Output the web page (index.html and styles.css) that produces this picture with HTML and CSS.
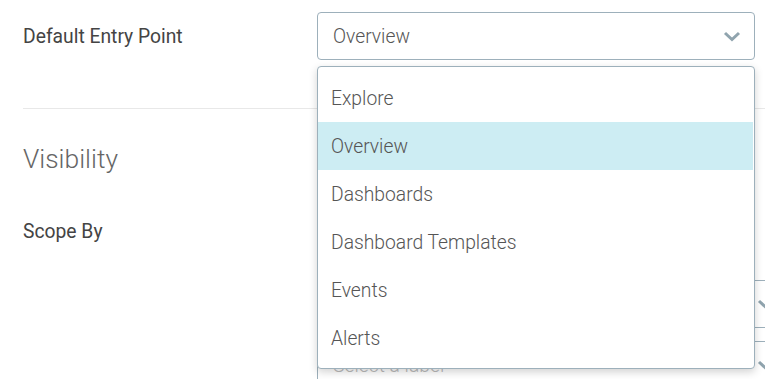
FILE: index.html
```html
<!DOCTYPE html>
<html lang="en">
<head>
    <meta charset="UTF-8">
    <meta name="viewport" content="width=device-width, initial-scale=1.0">
    <title>Settings</title>
    <link rel="stylesheet" href="styles.css">
</head>
<body>
    <div class="settings">
        <div class="row entry-row">
            <label class="field-label">Default Entry Point</label>
            <div class="select-wrap">
                <div class="select">
                    <span class="select-value">Overview</span>
                    <svg class="chevron" width="18" height="11" viewBox="0 0 18 11"><polyline points="2,2 9,8.5 16,2" /></svg>
                </div>
                <ul class="menu">
                    <li>Explore</li>
                    <li class="active">Overview</li>
                    <li>Dashboards</li>
                    <li>Dashboard Templates</li>
                    <li>Events</li>
                    <li>Alerts</li>
                </ul>
            </div>
        </div>

        <div class="divider"></div>

        <h2 class="section-title">Visibility</h2>

        <div class="row scope-row">
            <label class="field-label">Scope By</label>
            <div class="scope-fields">
                <div class="select wide">
                    <span class="select-value"></span>
                    <svg class="chevron" width="18" height="11" viewBox="0 0 18 11"><polyline points="2,2 9,8.5 16,2" /></svg>
                </div>
                <div class="select wide">
                    <span class="select-value placeholder">Select a label</span>
                    <svg class="chevron" width="18" height="11" viewBox="0 0 18 11"><polyline points="2,2 9,8.5 16,2" /></svg>
                </div>
            </div>
        </div>
    </div>
</body>
</html>
```

FILE: styles.css
```css
body, html {
    margin: 0;
    padding: 0;
    width: 100%;
    height: 100%;
    overflow: hidden;
    background: #fff;
    font-family: Roboto, "Liberation Sans", sans-serif;
}
.settings {
    padding: 12px 0 0 23px;
}
.row {
    display: flex;
}
.entry-row {
    align-items: center;
}
.field-label {
    width: 294px;
    flex-shrink: 0;
    font-size: 19.3px;
    color: #444;
}
.select-wrap {
    position: relative;
}
.select {
    box-sizing: border-box;
    width: 438px;
    height: 48px;
    border: 1px solid #9db0bb;
    border-radius: 4px;
    display: flex;
    align-items: center;
    justify-content: space-between;
    padding: 0 13px 0 15px;
    background: #fff;
}
.select-value {
    font-size: 19.3px;
    font-weight: 300;
    color: #555;
}
.placeholder {
    color: #bbb;
}
.chevron polyline {
    fill: none;
    stroke: #90a4ae;
    stroke-width: 3;
}
.menu {
    position: absolute;
    top: 54px;
    left: 0;
    box-sizing: border-box;
    width: 438px;
    margin: 0;
    padding: 7px 0 6px;
    list-style: none;
    background: #fff;
    border: 1px solid #9db0bb;
    border-radius: 4px;
    box-shadow: 0 3px 8px rgba(0, 0, 0, 0.18);
    z-index: 2;
}
.menu li {
    box-sizing: border-box;
    height: 48px;
    line-height: 48px;
    padding: 1px 13px 0;
    margin-right: 1px;
    font-size: 19.3px;
    font-weight: 300;
    color: #555;
}
.menu li.active {
    background: #cdedf3;
}
.divider {
    height: 1px;
    background: #e8e8e8;
    margin-top: 48px;
}
.section-title {
    margin: 35px 0 0;
    font-size: 26.4px;
    font-weight: 300;
    color: #666;
}
.scope-row {
    margin-top: 46px;
}
.scope-fields {
    display: flex;
    flex-direction: column;
    gap: 13px;
    padding-top: 60px;
}
.select.wide {
    width: 472px;
}
```
